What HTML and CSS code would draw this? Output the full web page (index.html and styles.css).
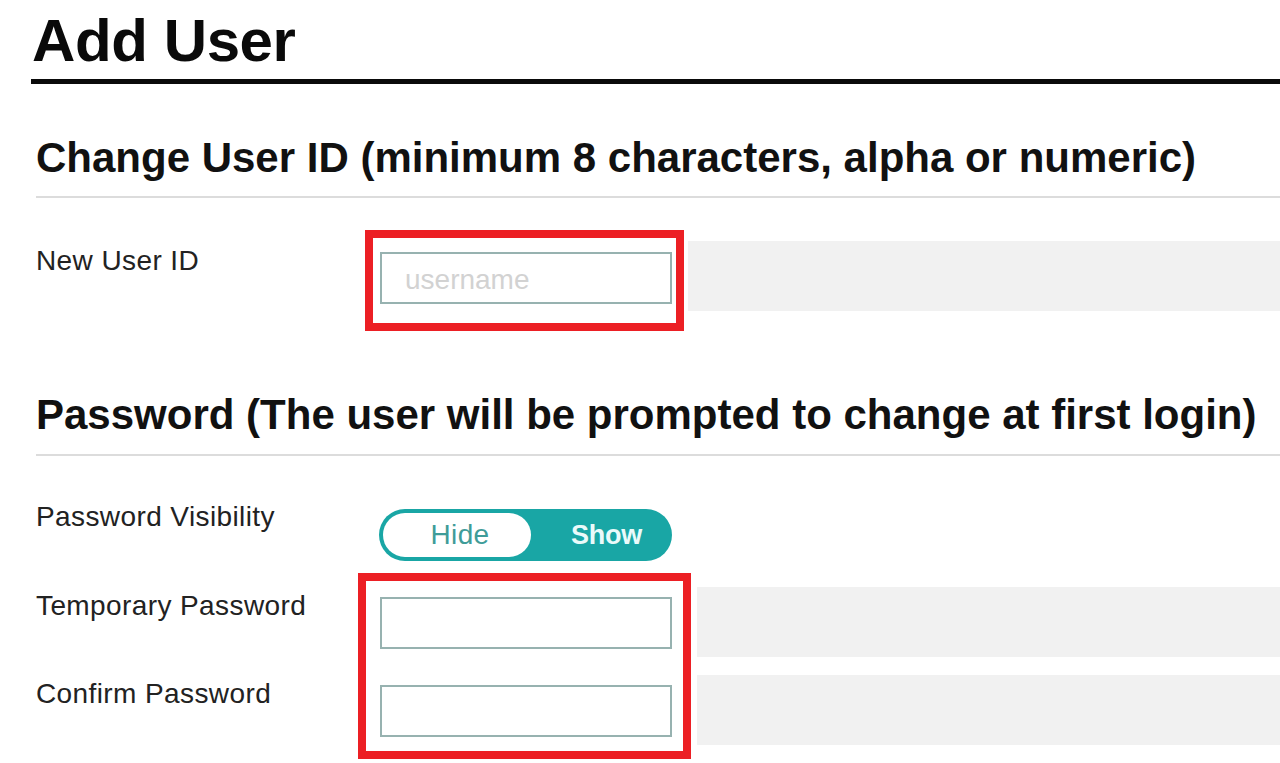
FILE: index.html
```html
<!DOCTYPE html>
<html lang="en">
<head>
  <meta charset="UTF-8">
  <title>Add User</title>
  <link rel="stylesheet" href="styles.css">
</head>
<body>
  <h1 class="page-title">Add User</h1>

  <div class="section">
    <h2 class="section-title">Change User ID (minimum 8 characters, alpha or numeric)</h2>

    <div class="row row-userid">
      <label class="field-label label-userid" for="userId">New User ID</label>
      <div class="mark mark-userid">
        <input id="userId" class="text-input" type="text" placeholder="username">
      </div>
      <div class="hint hint-userid"></div>
    </div>
  </div>

  <div class="section section-password">
    <h2 class="section-title">Password (The user will be prompted to change at first login)</h2>

    <div class="row row-toggle">
      <span class="field-label label-toggle">Password Visibility</span>
      <div class="toggle">
        <span class="toggle-opt active">Hide</span>
        <span class="toggle-opt">Show</span>
      </div>
    </div>

    <div class="row row-password">
      <div class="label-col">
        <label class="field-label" for="tempPass">Temporary Password</label>
        <label class="field-label" for="confirmPass">Confirm Password</label>
      </div>
      <div class="mark mark-password">
        <input id="tempPass" class="text-input" type="password">
        <input id="confirmPass" class="text-input" type="password">
      </div>
      <div class="hint-col">
        <div class="hint"></div>
        <div class="hint"></div>
      </div>
    </div>
  </div>
</body>
</html>
```

FILE: styles.css
```css
body {
  margin: 0;
  padding: 0;
  font-family: "Liberation Sans", Arial, Helvetica, sans-serif;
  background: #fff;
  color: #1a1a1a;
  overflow: hidden;
}

.page-title {
  margin: 7px 0 0 31px;
  padding: 0 0 4px 1px;
  font-size: 60px;
  line-height: 68px;
  font-weight: bold;
  color: #0a0a0a;
  letter-spacing: -0.4px;
  border-bottom: 5px solid #0a0a0a;
}

.section {
  margin-left: 36px;
}

.section-title {
  margin: 50px 0 0 0;
  padding-bottom: 14px;
  font-size: 42px;
  line-height: 48px;
  font-weight: bold;
  color: #111;
  border-bottom: 2px solid #dcdcdc;
}

.section-password .section-title {
  margin-top: 60px;
  padding-bottom: 15px;
}

.row {
  display: flex;
  align-items: flex-start;
}

.field-label {
  display: block;
  font-size: 28px;
  line-height: 32px;
  letter-spacing: 0.4px;
  color: #222;
}

.text-input {
  display: block;
  box-sizing: border-box;
  width: 292px;
  height: 52px;
  margin: 0;
  padding: 4px 0 0 23px;
  border: 2px solid #97b2b0;
  border-radius: 0;
  background: #fff;
  font-family: inherit;
  font-size: 28px;
  color: #333;
  outline: none;
}

.text-input::placeholder {
  color: #d2d2d2;
}

/* red annotation boxes */
.mark {
  background: #fff;
  border: 8px solid #ec1f24;
}

.hint {
  height: 70px;
  background: #f1f1f1;
}

/* user id row */
.row-userid {
  margin-top: 32px;
}

.label-userid {
  width: 329px;
  margin-top: 15px;
}

.mark-userid {
  padding: 14px 4px 19px 7px;
}

.hint-userid {
  flex: 1;
  margin: 11px 0 0 4px;
}

/* visibility toggle */
.row-toggle {
  margin-top: 45px;
}

.label-toggle {
  width: 343px;
}

.toggle {
  display: flex;
  box-sizing: border-box;
  width: 293px;
  height: 52px;
  margin-top: 8px;
  padding: 4px;
  background: #19a6a5;
  border-radius: 26px;
}

.toggle-opt {
  display: flex;
  align-items: center;
  justify-content: center;
  padding-left: 14px;
  font-size: 27px;
  font-weight: bold;
  letter-spacing: -0.3px;
  color: #eafafa;
  flex: 1;
}

.toggle-opt.active {
  flex: 0 0 142px;
  padding-left: 6px;
  background: #fff;
  border-radius: 22px;
  font-size: 28px;
  font-weight: normal;
  letter-spacing: 0.3px;
  color: #3f9c99;
}

/* password rows */
.row-password {
  margin-top: 12px;
}

.label-col {
  width: 322px;
  padding-top: 17px;
  display: flex;
  flex-direction: column;
  gap: 56px;
}

.mark-password {
  display: flex;
  flex-direction: column;
  gap: 36px;
  padding: 16px 11px 14px 14px;
}

.hint-col {
  flex: 1;
  display: flex;
  flex-direction: column;
  gap: 18px;
  margin: 14px 0 0 6px;
}
```
